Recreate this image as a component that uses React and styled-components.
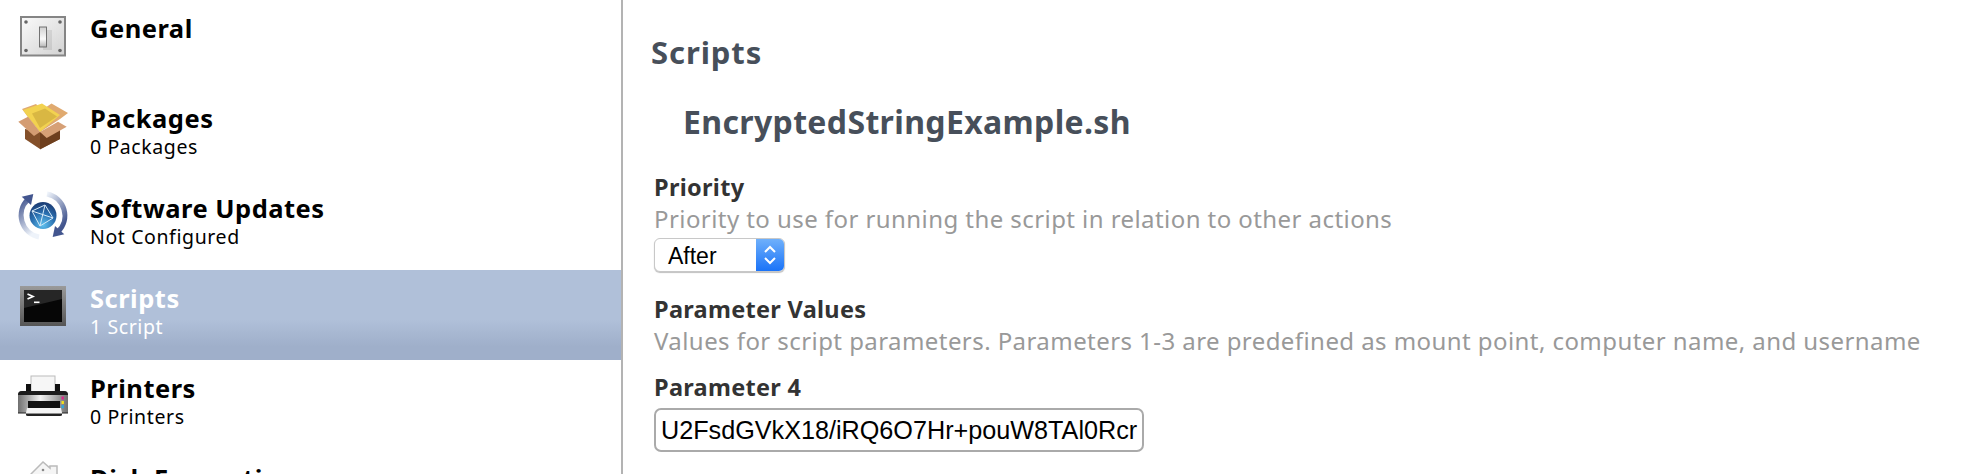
import React from "react";
import styled, { createGlobalStyle } from "styled-components";

const GlobalStyle = createGlobalStyle`
  html, body {
    margin: 0;
    padding: 0;
    background: #fff;
    overflow: hidden;
  }
  body {
    font-family: "Noto Sans", "DejaVu Sans", sans-serif;
  }
`;

const Page = styled.div`
  display: flex;
  width: 1962px;
  height: 474px;
  overflow: hidden;
  background: #fff;
`;

const Sidebar = styled.div`
  width: 621px;
  flex: none;
  border-right: 2px solid #b3b3b3;
`;

const Row = styled.div`
  display: flex;
  height: 90px;
  box-sizing: border-box;
  padding-top: 11px;
  padding-left: 17px;
  color: ${(p) => (p.$active ? "#fff" : "#000")};
  background: ${(p) =>
    p.$active
      ? "linear-gradient(180deg, #b0c0d9 0%, #b0c0d9 55%, #9fafca 85%, #9fafca 100%)"
      : "transparent"};
`;

const IconSlot = styled.div`
  width: 54px;
  height: 54px;
  flex: none;
`;

const RowText = styled.div`
  margin-left: 19px;
  padding-top: 2px;
`;

const RowTitle = styled.div`
  font-size: 25.5px;
  font-weight: 700;
  line-height: 30px;
  letter-spacing: 0.5px;
  white-space: nowrap;
`;

const RowSub = styled.div`
  font-size: 19.5px;
  line-height: 27px;
  letter-spacing: 0.6px;
  white-space: nowrap;
`;

const Main = styled.div`
  flex: 1;
  padding: 33px 0 0 31px;
  min-width: 0;
`;

const Heading = styled.h1`
  margin: 0 0 0 -3px;
  font-size: 31px;
  line-height: 38px;
  font-weight: 700;
  letter-spacing: 0.9px;
  color: #474f5a;
`;

const ScriptName = styled.h2`
  margin: 31px 0 0 29px;
  font-size: 32px;
  line-height: 40px;
  font-weight: 700;
  letter-spacing: 0.35px;
  color: #474f5a;
  white-space: nowrap;
`;

const FieldLabel = styled.div`
  margin-top: ${(p) => p.$top}px;
  font-size: 23.5px;
  line-height: 30px;
  font-weight: 700;
  letter-spacing: 0.3px;
  color: #333;
  white-space: nowrap;
`;

const FieldHint = styled.div`
  margin-top: 1px;
  font-size: 24px;
  line-height: 32px;
  letter-spacing: 0.43px;
  color: #999;
  white-space: nowrap;
`;

const SelectBox = styled.div`
  display: flex;
  width: 131px;
  height: 34px;
  box-sizing: border-box;
  margin-top: 3px;
  border: 1px solid #c8c8c8;
  border-radius: 6px;
  background: #fff;
  box-shadow: 0 1px 1px rgba(0, 0, 0, 0.25);
  overflow: hidden;
`;

const SelectValue = styled.div`
  flex: 1;
  padding-left: 13px;
  font-family: "Liberation Sans", Arial, sans-serif;
  font-size: 23px;
  line-height: 34px;
  color: #000;
`;

const SelectArrows = styled.div`
  display: flex;
  align-items: center;
  justify-content: center;
  width: 28px;
  background: linear-gradient(180deg, #6fb0fb 0%, #1a73f8 100%);
`;

const ValueInput = styled.input`
  display: block;
  width: 490px;
  height: 44px;
  box-sizing: border-box;
  margin-top: 6px;
  padding: 0 0 0 5px;
  border: 2px solid #aaa;
  border-radius: 7px;
  background: #fff;
  font-family: "Liberation Sans", Arial, sans-serif;
  font-size: 25.2px;
  color: #000;
  outline: none;
`;

const SwitchIcon = () => (
  <svg width="54" height="54" viewBox="0 0 54 54">
    <defs>
      <linearGradient id="plate" x1="0" y1="0" x2="1" y2="1">
        <stop offset="0" stopColor="#fafafa" />
        <stop offset="1" stopColor="#d2d2d2" />
      </linearGradient>
      <linearGradient id="toggle" x1="0" y1="0" x2="0" y2="1">
        <stop offset="0" stopColor="#d0d0d0" />
        <stop offset="0.6" stopColor="#fafafa" />
        <stop offset="1" stopColor="#b5b5b5" />
      </linearGradient>
    </defs>
    <rect x="4" y="6" width="44" height="38.5" fill="url(#plate)" stroke="#858585" strokeWidth="2" />
    <rect x="26" y="19" width="9" height="20" fill="#000" opacity="0.08" />
    <rect x="22.5" y="16" width="7" height="20" fill="url(#toggle)" stroke="#666" strokeWidth="0.9" />
    {[[9, 11], [43, 11], [9, 39.5], [43, 39.5]].map(([x, y]) => (
      <circle key={`${x}-${y}`} cx={x} cy={y} r="1.8" fill="#666" />
    ))}
  </svg>
);

const BoxIcon = () => (
  <svg width="54" height="54" viewBox="0 0 54 54">
    <path d="M8 28 L23 31 L43 29 L43 38 L23 48 L8 38Z" fill="#84502a" />
    <path d="M23 32 L43 26 L43 38 L23 48.5Z" fill="#6e3f1e" />
    <path d="M5 8 L19 3 L25 9 L34.5 2.5 L51 12 L43 18 L23 31 L11 16Z" fill="#e0aa70" />
    <path d="M6 9 L25 2.5 L43 14 L23 31 L11 16Z" fill="#f2d250" />
    <path d="M15 12.5 L28 7.5 L40 15.5 L23 27Z" fill="#d9b743" />
    <path d="M1.3 20.7 L11 15.7 L23 31 L17 35Z" fill="#d49c72" />
    <path d="M23 31 L41 20.7 L49.7 25.7 L29.7 37Z" fill="#d6a076" />
  </svg>
);

const GlobeIcon = () => (
  <svg width="54" height="54" viewBox="0 0 54 54">
    <defs>
      <radialGradient id="globe" cx="0.5" cy="0.85" r="0.8">
        <stop offset="0" stopColor="#5fc0ee" />
        <stop offset="0.55" stopColor="#2a6fb0" />
        <stop offset="1" stopColor="#1c3f78" />
      </radialGradient>
      <linearGradient id="arcA" x1="0" y1="0" x2="0.4" y2="1">
        <stop offset="0" stopColor="#43568f" />
        <stop offset="1" stopColor="#eef3fa" />
      </linearGradient>
      <linearGradient id="arcB" x1="0.6" y1="1" x2="0" y2="0">
        <stop offset="0" stopColor="#43568f" />
        <stop offset="1" stopColor="#eef3fa" />
      </linearGradient>
    </defs>
    <circle cx="26" cy="24.5" r="13.5" fill="url(#globe)" />
    <path d="M15 20 L28 14 L36 27 L23 35 L15 20 M28 14 L23 35 M15 20 L36 27" stroke="#d6e8f6" strokeWidth="1" fill="none" />
    <path d="M11 8.4 A22 22 0 0 0 22 46" stroke="url(#arcA)" strokeWidth="5" fill="none" />
    <path d="M4.7 5.7 L16.3 3 L14 14Z" fill="#43568f" />
    <path d="M41 40.6 A22 22 0 0 0 30 3" stroke="url(#arcB)" strokeWidth="5" fill="none" />
    <path d="M47.3 43.3 L35.7 46 L38 35Z" fill="#43568f" />
  </svg>
);

const TerminalIcon = () => (
  <svg width="54" height="54" viewBox="0 0 54 54">
    <defs>
      <linearGradient id="frame" x1="0" y1="0" x2="0" y2="1">
        <stop offset="0" stopColor="#9a9a9a" />
        <stop offset="1" stopColor="#555" />
      </linearGradient>
    </defs>
    <rect x="3" y="5" width="46" height="40" fill="url(#frame)" />
    <rect x="7" y="9" width="38" height="32" fill="#060606" />
    <path d="M7 9 H45 V18 L7 27Z" fill="#262626" />
    <path d="M10.5 13 L16 15.5 L10.5 18" stroke="#fff" strokeWidth="1.7" fill="none" />
    <rect x="17" y="20.5" width="5.5" height="1.6" fill="#fff" />
  </svg>
);

const PrinterIcon = () => (
  <svg width="54" height="54" viewBox="0 0 54 54">
    <defs>
      <linearGradient id="body" x1="0" y1="0" x2="1" y2="0">
        <stop offset="0" stopColor="#6f6f6f" />
        <stop offset="0.45" stopColor="#f2f2f2" />
        <stop offset="1" stopColor="#6f6f6f" />
      </linearGradient>
    </defs>
    <rect x="14" y="5" width="24" height="17" fill="#f6f6f6" stroke="#bbb" />
    <rect x="9" y="13" width="5" height="7" fill="#111" />
    <rect x="38" y="13" width="5" height="7" fill="#111" />
    <path d="M1 24 Q1 20 5 20 H47 Q51 20 51 24 V42 H1Z" fill="url(#body)" />
    <path d="M1 24 Q1 20 5 20 H47 Q51 20 51 24Z" fill="#1c1c1c" />
    <rect x="11" y="30" width="32" height="8" fill="#111" />
    <path d="M10 37 H44 L45 42 H9Z" fill="#f4f4f4" />
    <path d="M1 41.5 H9 V44 Q9 45 11 45 H43 Q45 45 45 44 V41.5 H51 V42.5 H1Z" fill="#222" />
    <rect x="44.5" y="25.5" width="2.4" height="3" fill="#e0268c" />
    <rect x="44.5" y="30" width="2.4" height="3" fill="#f4e11a" />
    <rect x="44.5" y="34.2" width="2.4" height="3" fill="#2aa9e0" />
  </svg>
);

const HouseIcon = () => (
  <svg width="54" height="54" viewBox="0 0 54 54">
    <path d="M14 13 L26 1 L33 7 V5 H40 V24 H14Z" fill="#f5f5f5" stroke="#bbb" strokeWidth="1.5" />
    <circle cx="26" cy="9" r="1.3" fill="#888" />
  </svg>
);

const ChevronPair = () => (
  <svg width="16" height="24" viewBox="0 0 16 24">
    <path d="M3 9 L8 4 L13 9 M3 15 L8 20 L13 15" stroke="#fff" strokeWidth="2" fill="none" />
  </svg>
);

const items = [
  { title: "General", Icon: SwitchIcon },
  { title: "Packages", sub: "0 Packages", Icon: BoxIcon },
  { title: "Software Updates", sub: "Not Configured", Icon: GlobeIcon },
  { title: "Scripts", sub: "1 Script", Icon: TerminalIcon, active: true },
  { title: "Printers", sub: "0 Printers", Icon: PrinterIcon },
  { title: "Disk Encryption", Icon: HouseIcon },
];

export default function App() {
  return (
    <Page>
      <GlobalStyle />
      <Sidebar>
        {items.map(({ title, sub, Icon, active }) => (
          <Row key={title} $active={active}>
            <IconSlot>
              <Icon />
            </IconSlot>
            <RowText>
              <RowTitle>{title}</RowTitle>
              {sub && <RowSub>{sub}</RowSub>}
            </RowText>
          </Row>
        ))}
      </Sidebar>
      <Main>
        <Heading>Scripts</Heading>
        <ScriptName>EncryptedStringExample.sh</ScriptName>
        <FieldLabel $top={30}>Priority</FieldLabel>
        <FieldHint>Priority to use for running the script in relation to other actions</FieldHint>
        <SelectBox>
          <SelectValue>After</SelectValue>
          <SelectArrows>
            <ChevronPair />
          </SelectArrows>
        </SelectBox>
        <FieldLabel $top={22}>Parameter Values</FieldLabel>
        <FieldHint>Values for script parameters. Parameters 1-3 are predefined as mount point, computer name, and username</FieldHint>
        <FieldLabel $top={15}>Parameter 4</FieldLabel>
        <ValueInput readOnly value="U2FsdGVkX18/iRQ6O7Hr+pouW8TAl0Rcr" />
      </Main>
    </Page>
  );
}
